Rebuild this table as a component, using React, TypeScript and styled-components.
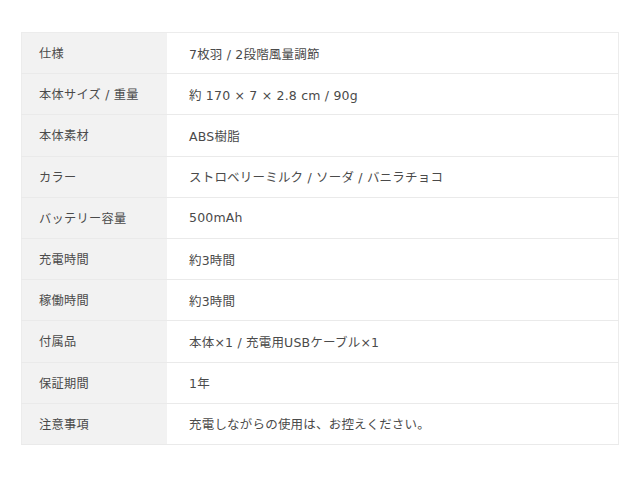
import styled, { createGlobalStyle } from 'styled-components';

const specs = [
  ['仕様', '7枚羽 / 2段階風量調節'],
  ['本体サイズ / 重量', '約 170 × 7 × 2.8 cm / 90g'],
  ['本体素材', 'ABS樹脂'],
  ['カラー', 'ストロベリーミルク / ソーダ / バニラチョコ'],
  ['バッテリー容量', '500mAh'],
  ['充電時間', '約3時間'],
  ['稼働時間', '約3時間'],
  ['付属品', '本体×1 / 充電用USBケーブル×1'],
  ['保証期間', '1年'],
  ['注意事項', '充電しながらの使用は、お控えください。'],
];

const GlobalStyle = createGlobalStyle`
  body {
    margin: 0;
    background: #fff;
    font-family: "DejaVu Sans", "Noto Sans CJK JP", sans-serif;
  }
`

const App = () => {
  return <>
    <GlobalStyle />
    <Page>
      <SpecTable>
        <tbody>
          {specs.map(([label, value]) => (
            <tr key={label}>
              <Th>{label}</Th>
              <Td>{value}</Td>
            </tr>
          ))}
        </tbody>
      </SpecTable>
    </Page>
  </>
}

const Page = styled.div`
  padding: 32px 21px 0;
`

const SpecTable = styled.table`
  width: 598px;
  border-collapse: collapse;
  border: 1px solid #ececec;
`

const Th = styled.th`
  width: 128px;
  height: 40.2px;
  padding: 0 0 0 17px;
  background: #f2f2f2;
  border-bottom: 1px solid #eaeaea;
  color: #4a4a4a;
  font-size: 12.2px;
  font-weight: normal;
  text-align: left;
  vertical-align: middle;
  letter-spacing: 0.3px;
`

const Td = styled.td`
  height: 40.2px;
  padding: 0 0 0 22px;
  background: #fff;
  border-bottom: 1px solid #eaeaea;
  color: #4a4a4a;
  font-size: 12.5px;
  vertical-align: middle;
  letter-spacing: 0.2px;
`

export default App
